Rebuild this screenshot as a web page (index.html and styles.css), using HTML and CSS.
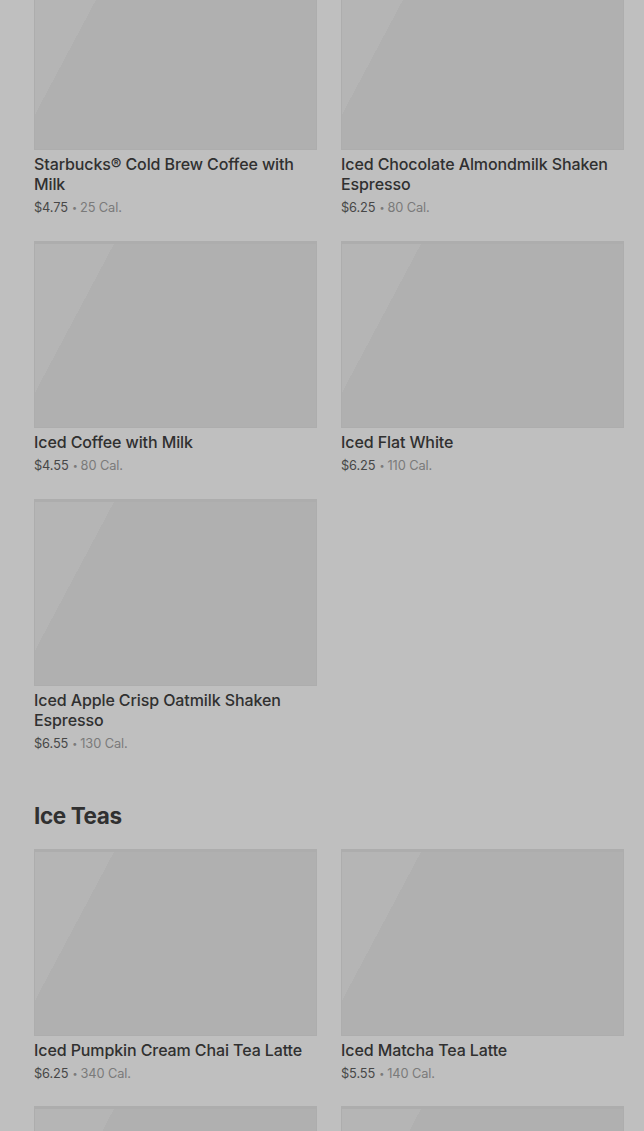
FILE: index.html
```html
<!DOCTYPE html>
<html lang="en">
<head>
<meta charset="utf-8">
<title>Menu</title>
<link rel="stylesheet" href="styles.css">
</head>
<body>
<div class="page">
  <section class="section first">
    <div class="grid">
      <div class="card"><div class="thumb"></div><div class="name">Starbucks® Cold Brew Coffee with Milk</div><div class="meta"><span class="price">$4.75</span><span class="dot">•</span>25 Cal.</div></div>
      <div class="card"><div class="thumb"></div><div class="name">Iced Chocolate Almondmilk Shaken Espresso</div><div class="meta"><span class="price">$6.25</span><span class="dot">•</span>80 Cal.</div></div>
      <div class="card"><div class="thumb"></div><div class="name">Iced Coffee with Milk</div><div class="meta"><span class="price">$4.55</span><span class="dot">•</span>80 Cal.</div></div>
      <div class="card"><div class="thumb"></div><div class="name">Iced Flat White</div><div class="meta"><span class="price">$6.25</span><span class="dot">•</span>110 Cal.</div></div>
      <div class="card"><div class="thumb"></div><div class="name">Iced Apple Crisp Oatmilk Shaken Espresso</div><div class="meta"><span class="price">$6.55</span><span class="dot">•</span>130 Cal.</div></div>
    </div>
  </section>
  <section class="section">
    <h2 class="heading">Ice Teas</h2>
    <div class="grid">
      <div class="card"><div class="thumb"></div><div class="name">Iced Pumpkin Cream Chai Tea Latte</div><div class="meta"><span class="price">$6.25</span><span class="dot">•</span>340 Cal.</div></div>
      <div class="card"><div class="thumb"></div><div class="name">Iced Matcha Tea Latte</div><div class="meta"><span class="price">$5.55</span><span class="dot">•</span>140 Cal.</div></div>
      <div class="card"><div class="thumb"></div></div>
      <div class="card"><div class="thumb"></div></div>
    </div>
  </section>
</div>
</body>
</html>
```
FILE: styles.css
```css
html, body {
  margin: 0;
  padding: 0;
  background: #bfbfbf;
  overflow: hidden;
}
body {
  font-family: Inter, "Noto Sans", "Liberation Sans", sans-serif;
  color: #303030;
}
.page {
  padding: 0 20px 0 34px;
  margin-top: -37px;
}
.section {
  margin-top: 47px;
}
.section.first {
  margin-top: 0;
}
.heading {
  margin: 0 0 17px;
  font-size: 22.5px;
  line-height: 32px;
  font-weight: 700;
  letter-spacing: -0.4px;
  color: #303030;
}
.grid {
  display: grid;
  grid-template-columns: 283px 283px;
  column-gap: 24px;
  row-gap: 23px;
}
.section.first .grid {
  row-gap: 24px;
}
.thumb {
  height: 187px;
  background: linear-gradient(118deg, #b5b5b5 72px, #b0b0b0 72px);
  box-shadow: inset 0 0 0 1px #adadad, inset 0 2px 0 1px #adadad;
}
.name {
  margin-top: 4px;
  font-size: 16px;
  line-height: 20px;
  font-weight: 500;
  letter-spacing: -0.1px;
  color: #303030;
}
.meta {
  margin-top: 4px;
  font-size: 12.8px;
  line-height: 19px;
  letter-spacing: -0.1px;
  color: #7a7a7a;
}
.price {
  color: #474747;
}
.dot {
  font-size: 9px;
  margin: 0 3px 0 4px;
  vertical-align: 1px;
}
```
